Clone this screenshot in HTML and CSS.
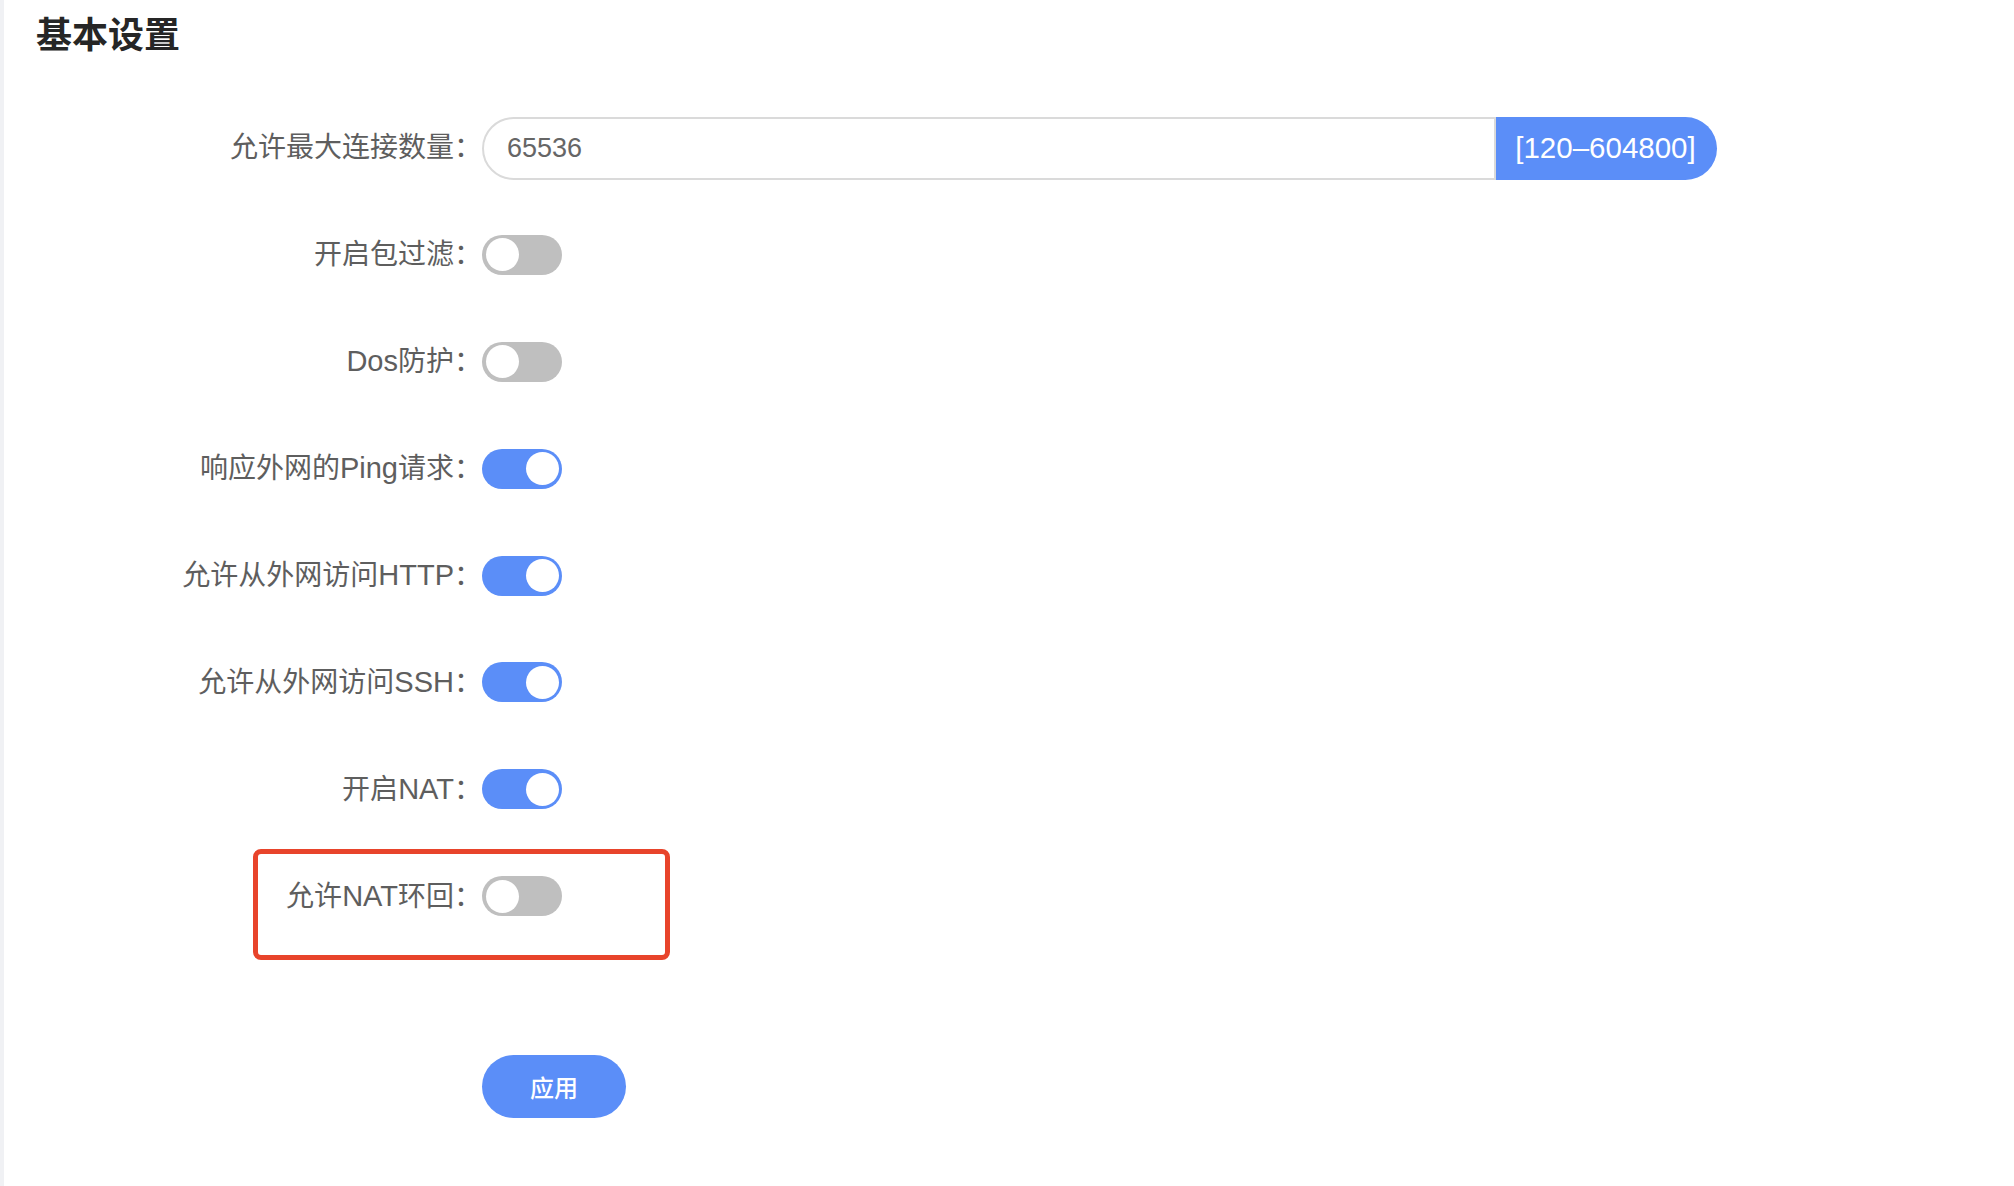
FILE: index.html
```html
<!DOCTYPE html>
<html lang="zh-CN">
<head>
<meta charset="utf-8">
<title>基本设置</title>
<link rel="stylesheet" href="styles.css">
</head>
<body>
<div class="page">
  <aside class="rail"></aside>
  <main class="content">
    <h1 class="title">基本设置</h1>
    <form class="form">
      <div class="row">
        <label class="label">允许最大连接数量：</label>
        <div class="input-group">
          <input class="input" type="text" value="65536">
          <span class="addon">[120–604800]</span>
        </div>
      </div>
      <div class="row">
        <label class="label">开启包过滤：</label>
        <span class="switch"></span>
      </div>
      <div class="row">
        <label class="label"><span class="en">Dos</span>防护：</label>
        <span class="switch"></span>
      </div>
      <div class="row">
        <label class="label">响应外网的<span class="en">Ping</span>请求：</label>
        <span class="switch on"></span>
      </div>
      <div class="row">
        <label class="label">允许从外网访问<span class="en">HTTP</span>：</label>
        <span class="switch on"></span>
      </div>
      <div class="row">
        <label class="label">允许从外网访问<span class="en">SSH</span>：</label>
        <span class="switch on"></span>
      </div>
      <div class="row">
        <label class="label">开启<span class="en">NAT</span>：</label>
        <span class="switch on"></span>
      </div>
      <div class="row marked">
        <label class="label">允许<span class="en">NAT</span>环回：</label>
        <span class="switch"></span>
        <span class="mark"></span>
      </div>
      <div class="actions">
        <button class="btn" type="button">应用</button>
      </div>
    </form>
  </main>
</div>
</body>
</html>
```

FILE: styles.css
```css
* { box-sizing: border-box; }
html, body { margin: 0; padding: 0; background: #fff; }
body {
  font-family: "Liberation Sans", "Noto Sans CJK SC", sans-serif;
  color: #606060;
}
.page {
  display: flex;
  min-height: 1186px;
}
.rail {
  width: 4px;
  flex: none;
  background: #f0f1f4;
}
.content {
  flex: 1;
  background: #fff;
}
.title {
  margin: 0;
  padding: 10px 0 0 32px;
  font-size: 36px;
  line-height: 51px;
  font-weight: bold;
  color: #262626;
}
.form {
  display: flex;
  flex-direction: column;
  gap: 42.9px;
  margin-top: 55px;
}
.row {
  position: relative;
  display: grid;
  grid-template-columns: 478px auto;
  align-items: center;
  height: 64px;
}
.label {
  text-align: right;
  font-size: 28px;
  line-height: 40px;
  color: #5e5e5e;
  white-space: nowrap;
}
.en { font-size: 29px; }
.input-group {
  display: flex;
  width: 1235px;
  height: 63px;
}
.input {
  width: 1014px;
  height: 100%;
  border: 2px solid #dadada;
  border-radius: 32px 0 0 32px;
  padding: 0 0 0 23px;
  font-family: "Liberation Sans", sans-serif;
  font-size: 27px;
  color: #666;
  outline: none;
}
.addon {
  flex: 1;
  display: flex;
  align-items: center;
  justify-content: center;
  background: #5b8ef8;
  color: #fff;
  border-radius: 0 32px 32px 0;
  font-size: 29.5px;
  padding-right: 2px;
}
.switch {
  position: relative;
  display: block;
  width: 80px;
  height: 40px;
  border-radius: 20px;
  background: #bfbfbf;
}
.switch::after {
  content: "";
  position: absolute;
  top: 3.5px;
  left: 3.5px;
  width: 33px;
  height: 33px;
  border-radius: 50%;
  background: #fff;
}
.switch.on { background: #5b8ef8; }
.switch.on::after { left: 43.5px; }
.mark {
  position: absolute;
  left: 249px;
  top: -15px;
  width: 417px;
  height: 111px;
  border: 5px solid #e8442b;
  border-radius: 8px;
  pointer-events: none;
}
.actions {
  padding-left: 478px;
  margin-top: 84px;
}
.btn {
  width: 144px;
  height: 63px;
  border: none;
  border-radius: 32px;
  background: #5b8ef8;
  color: #fff;
  font-family: "Noto Sans CJK SC", sans-serif;
  font-size: 24px;
  font-weight: 500;
  cursor: pointer;
}
```
